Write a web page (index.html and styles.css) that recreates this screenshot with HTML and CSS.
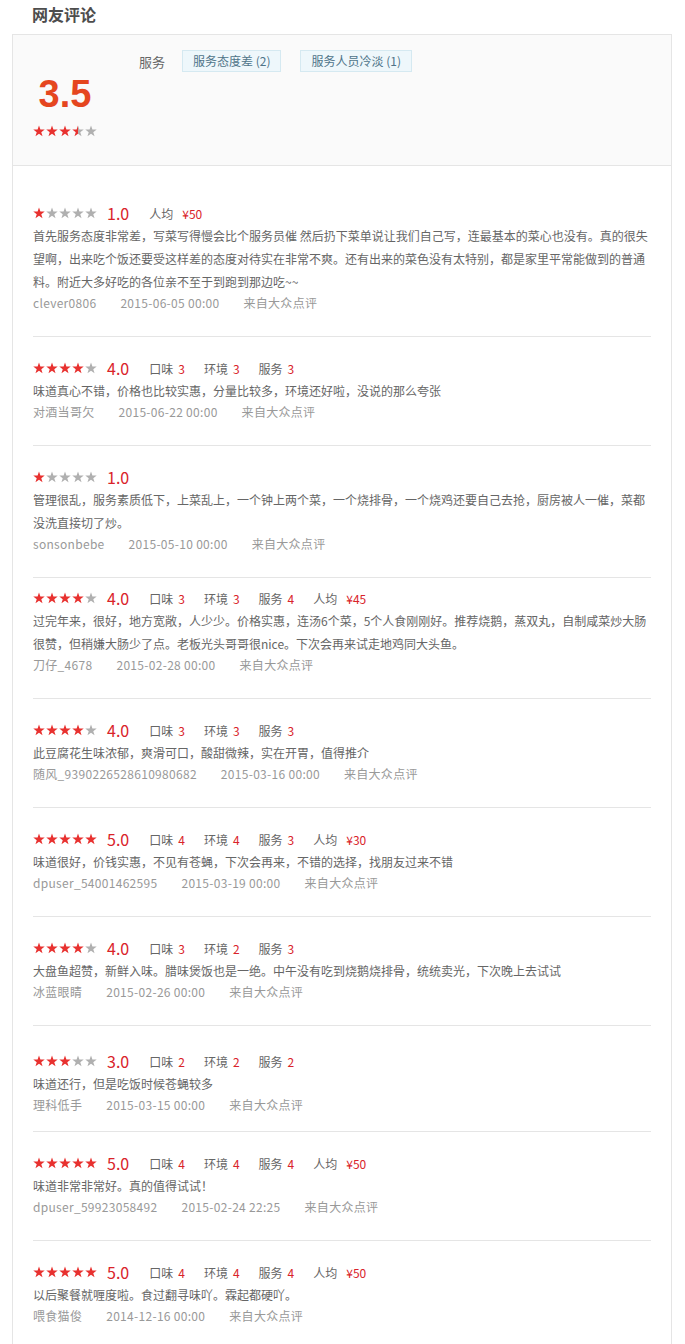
FILE: index.html
```html
<!DOCTYPE html>
<html lang="zh-CN">
<head>
    <meta charset="UTF-8">
    <title>网友评论</title>
    <link rel="stylesheet" href="styles.css">
</head>
<body>
<svg class="defs" width="0" height="0">
    <defs>
        <symbol id="star" viewBox="0 0 12 12">
            <polygon points="6,0.4 7.41,4.46 11.71,4.55 8.28,7.14 9.53,11.25 6,8.8 2.47,11.25 3.72,7.14 0.29,4.55 4.59,4.46"/>
        </symbol>
        <linearGradient id="half">
            <stop offset="50%" stop-color="#e8312f"/>
            <stop offset="50%" stop-color="#b0b0b0"/>
        </linearGradient>
    </defs>
</svg>

<div class="page">
    <h2 class="title">网友评论</h2>

    <div class="comment-box">
        <!-- 总评分 -->
        <div class="summary">
            <div class="score-col">
                <div class="big-score">3.5</div>
                <div class="stars">
                    <svg class="on"><use href="#star"/></svg>
                    <svg class="on"><use href="#star"/></svg>
                    <svg class="on"><use href="#star"/></svg>
                    <svg class="half"><use href="#star"/></svg>
                    <svg><use href="#star"/></svg>
                </div>
            </div>
            <div class="tag-row">
                <span class="tag-label">服务</span>
                <span class="tag">服务态度差 (2)</span>
                <span class="tag">服务人员冷淡 (1)</span>
            </div>
        </div>

        <!-- 评论列表 -->
        <ul class="list">
            <li>
                <div class="rate">
                    <div class="stars">
                        <svg class="on"><use href="#star"/></svg>
                        <svg><use href="#star"/></svg>
                        <svg><use href="#star"/></svg>
                        <svg><use href="#star"/></svg>
                        <svg><use href="#star"/></svg>
                    </div>
                    <span class="score">1.0</span>
                    <span class="item">人均<em class="price">¥50</em></span>
                </div>
                <p class="text">首先服务态度非常差，写菜写得慢会比个服务员催 然后扔下菜单说让我们自己写，连最基本的菜心也没有。真的很失望啊，出来吃个饭还要受这样差的态度对待实在非常不爽。还有出来的菜色没有太特别，都是家里平常能做到的普通料。附近大多好吃的各位亲不至于到跑到那边吃~~</p>
                <div class="meta"><span>clever0806</span><span>2015-06-05 00:00</span><span>来自大众点评</span></div>
            </li>
            <li>
                <div class="rate">
                    <div class="stars">
                        <svg class="on"><use href="#star"/></svg>
                        <svg class="on"><use href="#star"/></svg>
                        <svg class="on"><use href="#star"/></svg>
                        <svg class="on"><use href="#star"/></svg>
                        <svg><use href="#star"/></svg>
                    </div>
                    <span class="score">4.0</span>
                    <span class="item">口味<em>3</em></span>
                    <span class="item">环境<em>3</em></span>
                    <span class="item">服务<em>3</em></span>
                </div>
                <p class="text">味道真心不错，价格也比较实惠，分量比较多，环境还好啦，没说的那么夸张</p>
                <div class="meta"><span>对酒当哥欠</span><span>2015-06-22 00:00</span><span>来自大众点评</span></div>
            </li>
            <li>
                <div class="rate">
                    <div class="stars">
                        <svg class="on"><use href="#star"/></svg>
                        <svg><use href="#star"/></svg>
                        <svg><use href="#star"/></svg>
                        <svg><use href="#star"/></svg>
                        <svg><use href="#star"/></svg>
                    </div>
                    <span class="score">1.0</span>
                </div>
                <p class="text">管理很乱，服务素质低下，上菜乱上，一个钟上两个菜，一个烧排骨，一个烧鸡还要自己去抢，厨房被人一催，菜都没洗直接切了炒。</p>
                <div class="meta"><span>sonsonbebe</span><span>2015-05-10 00:00</span><span>来自大众点评</span></div>
            </li>
            <li class="tight-top">
                <div class="rate">
                    <div class="stars">
                        <svg class="on"><use href="#star"/></svg>
                        <svg class="on"><use href="#star"/></svg>
                        <svg class="on"><use href="#star"/></svg>
                        <svg class="on"><use href="#star"/></svg>
                        <svg><use href="#star"/></svg>
                    </div>
                    <span class="score">4.0</span>
                    <span class="item">口味<em>3</em></span>
                    <span class="item">环境<em>3</em></span>
                    <span class="item">服务<em>4</em></span>
                    <span class="item">人均<em class="price">¥45</em></span>
                </div>
                <p class="text">过完年来，很好，地方宽敞，人少少。价格实惠，连汤6个菜，5个人食刚刚好。推荐烧鹅，蒸双丸，自制咸菜炒大肠很赞，但稍嫌大肠少了点。老板光头哥哥很nice。下次会再来试走地鸡同大头鱼。</p>
                <div class="meta"><span>刀仔_4678</span><span>2015-02-28 00:00</span><span>来自大众点评</span></div>
            </li>
            <li>
                <div class="rate">
                    <div class="stars">
                        <svg class="on"><use href="#star"/></svg>
                        <svg class="on"><use href="#star"/></svg>
                        <svg class="on"><use href="#star"/></svg>
                        <svg class="on"><use href="#star"/></svg>
                        <svg><use href="#star"/></svg>
                    </div>
                    <span class="score">4.0</span>
                    <span class="item">口味<em>3</em></span>
                    <span class="item">环境<em>3</em></span>
                    <span class="item">服务<em>3</em></span>
                </div>
                <p class="text">此豆腐花生味浓郁，爽滑可口，酸甜微辣，实在开胃，值得推介</p>
                <div class="meta"><span>随风_9390226528610980682</span><span>2015-03-16 00:00</span><span>来自大众点评</span></div>
            </li>
            <li>
                <div class="rate">
                    <div class="stars">
                        <svg class="on"><use href="#star"/></svg>
                        <svg class="on"><use href="#star"/></svg>
                        <svg class="on"><use href="#star"/></svg>
                        <svg class="on"><use href="#star"/></svg>
                        <svg class="on"><use href="#star"/></svg>
                    </div>
                    <span class="score">5.0</span>
                    <span class="item">口味<em>4</em></span>
                    <span class="item">环境<em>4</em></span>
                    <span class="item">服务<em>3</em></span>
                    <span class="item">人均<em class="price">¥30</em></span>
                </div>
                <p class="text">味道很好，价钱实惠，不见有苍蝇，下次会再来，不错的选择，找朋友过来不错</p>
                <div class="meta"><span>dpuser_54001462595</span><span>2015-03-19 00:00</span><span>来自大众点评</span></div>
            </li>
            <li>
                <div class="rate">
                    <div class="stars">
                        <svg class="on"><use href="#star"/></svg>
                        <svg class="on"><use href="#star"/></svg>
                        <svg class="on"><use href="#star"/></svg>
                        <svg class="on"><use href="#star"/></svg>
                        <svg><use href="#star"/></svg>
                    </div>
                    <span class="score">4.0</span>
                    <span class="item">口味<em>3</em></span>
                    <span class="item">环境<em>2</em></span>
                    <span class="item">服务<em>3</em></span>
                </div>
                <p class="text">大盘鱼超赞，新鲜入味。腊味煲饭也是一绝。中午没有吃到烧鹅烧排骨，统统卖光，下次晚上去试试</p>
                <div class="meta"><span>冰蓝眼睛</span><span>2015-02-26 00:00</span><span>来自大众点评</span></div>
            </li>
            <li class="shifted">
                <div class="rate">
                    <div class="stars">
                        <svg class="on"><use href="#star"/></svg>
                        <svg class="on"><use href="#star"/></svg>
                        <svg class="on"><use href="#star"/></svg>
                        <svg><use href="#star"/></svg>
                        <svg><use href="#star"/></svg>
                    </div>
                    <span class="score">3.0</span>
                    <span class="item">口味<em>2</em></span>
                    <span class="item">环境<em>2</em></span>
                    <span class="item">服务<em>2</em></span>
                </div>
                <p class="text">味道还行，但是吃饭时候苍蝇较多</p>
                <div class="meta"><span>理科低手</span><span>2015-03-15 00:00</span><span>来自大众点评</span></div>
            </li>
            <li>
                <div class="rate">
                    <div class="stars">
                        <svg class="on"><use href="#star"/></svg>
                        <svg class="on"><use href="#star"/></svg>
                        <svg class="on"><use href="#star"/></svg>
                        <svg class="on"><use href="#star"/></svg>
                        <svg class="on"><use href="#star"/></svg>
                    </div>
                    <span class="score">5.0</span>
                    <span class="item">口味<em>4</em></span>
                    <span class="item">环境<em>4</em></span>
                    <span class="item">服务<em>4</em></span>
                    <span class="item">人均<em class="price">¥50</em></span>
                </div>
                <p class="text">味道非常非常好。真的值得试试！</p>
                <div class="meta"><span>dpuser_59923058492</span><span>2015-02-24 22:25</span><span>来自大众点评</span></div>
            </li>
            <li>
                <div class="rate">
                    <div class="stars">
                        <svg class="on"><use href="#star"/></svg>
                        <svg class="on"><use href="#star"/></svg>
                        <svg class="on"><use href="#star"/></svg>
                        <svg class="on"><use href="#star"/></svg>
                        <svg class="on"><use href="#star"/></svg>
                    </div>
                    <span class="score">5.0</span>
                    <span class="item">口味<em>4</em></span>
                    <span class="item">环境<em>4</em></span>
                    <span class="item">服务<em>4</em></span>
                    <span class="item">人均<em class="price">¥50</em></span>
                </div>
                <p class="text">以后聚餐就喱度啦。食过翻寻味吖。霖起都硬吖。</p>
                <div class="meta"><span>喂食猫俊</span><span>2014-12-16 00:00</span><span>来自大众点评</span></div>
            </li>
        </ul>
    </div>
</div>
</body>
</html>
```

FILE: styles.css
```css
* {
    margin: 0;
    padding: 0;
}

ul {
    list-style: none;
}

em {
    font-style: normal;
}

body {
    font-family: "Noto Sans CJK SC", sans-serif;
    font-size: 12px;
    color: #666;
    background-color: #fff;
}

.defs {
    position: absolute;
}

.page {
    padding: 0 13px 0 12px;
}

.title {
    margin-left: 20px;
    height: 28px;
    line-height: 28px;
    margin-bottom: 6px;
    font-size: 16px;
    font-weight: bold;
    color: #4d4d4d;
}

.comment-box {
    border: 1px solid #e5e5e5;
    border-bottom: none;
}

/* 星星 */
.stars {
    display: flex;
    gap: 1px;
    height: 12px;
}

.stars svg {
    width: 12px;
    height: 12px;
    fill: #b0b0b0;
}

.stars svg.on {
    fill: #e8312f;
}

.stars svg.half {
    fill: url(#half);
}

/* 总评分 */
.summary {
    display: flex;
    height: 115px;
    padding: 15px 20px 0;
    background-color: #fafafa;
    border-bottom: 1px solid #e5e5e5;
}

.score-col {
    width: 64px;
    margin-top: 22px;
}

.big-score {
    height: 44px;
    line-height: 44px;
    text-align: center;
    font-family: "Liberation Sans", sans-serif;
    font-size: 38px;
    font-weight: bold;
    color: #e5461f;
}

.score-col .stars {
    margin-top: 9px;
}

.tag-row {
    display: flex;
    align-items: center;
    height: 22px;
    margin-left: 42px;
}

.tag-label {
    font-size: 13px;
    color: #666;
    margin-right: 17px;
}

.tag {
    height: 20px;
    line-height: 20px;
    padding: 0 10px;
    margin-right: 19px;
    border: 1px solid #d5e9f1;
    background-color: #eef7fb;
    color: #4f7489;
}

/* 评论列表 */
.list {
    padding: 16px 20px 0;
}

.list li {
    padding: 20px 0 23px;
    border-bottom: 1px solid #e5e5e5;
}

.list li.tight-top {
    padding-top: 9px;
}

.list li.shifted {
    padding-top: 24px;
    padding-bottom: 16px;
}

.list li:last-child {
    border-bottom: none;
}

.rate {
    display: flex;
    align-items: center;
    height: 22px;
}

.score {
    margin-left: 10px;
    margin-right: 1px;
    font-size: 16px;
    color: #d9232a;
}

.item {
    margin-left: 19px;
    color: #666;
}

.item em {
    margin-left: 5px;
    color: #d9232a;
}

.item em.price {
    margin-left: 9px;
}

.text {
    line-height: 23px;
    color: #666;
}

.meta {
    height: 20px;
    line-height: 20px;
    letter-spacing: 0.3px;
    color: #999;
}

.meta span {
    margin-right: 24px;
}
```
